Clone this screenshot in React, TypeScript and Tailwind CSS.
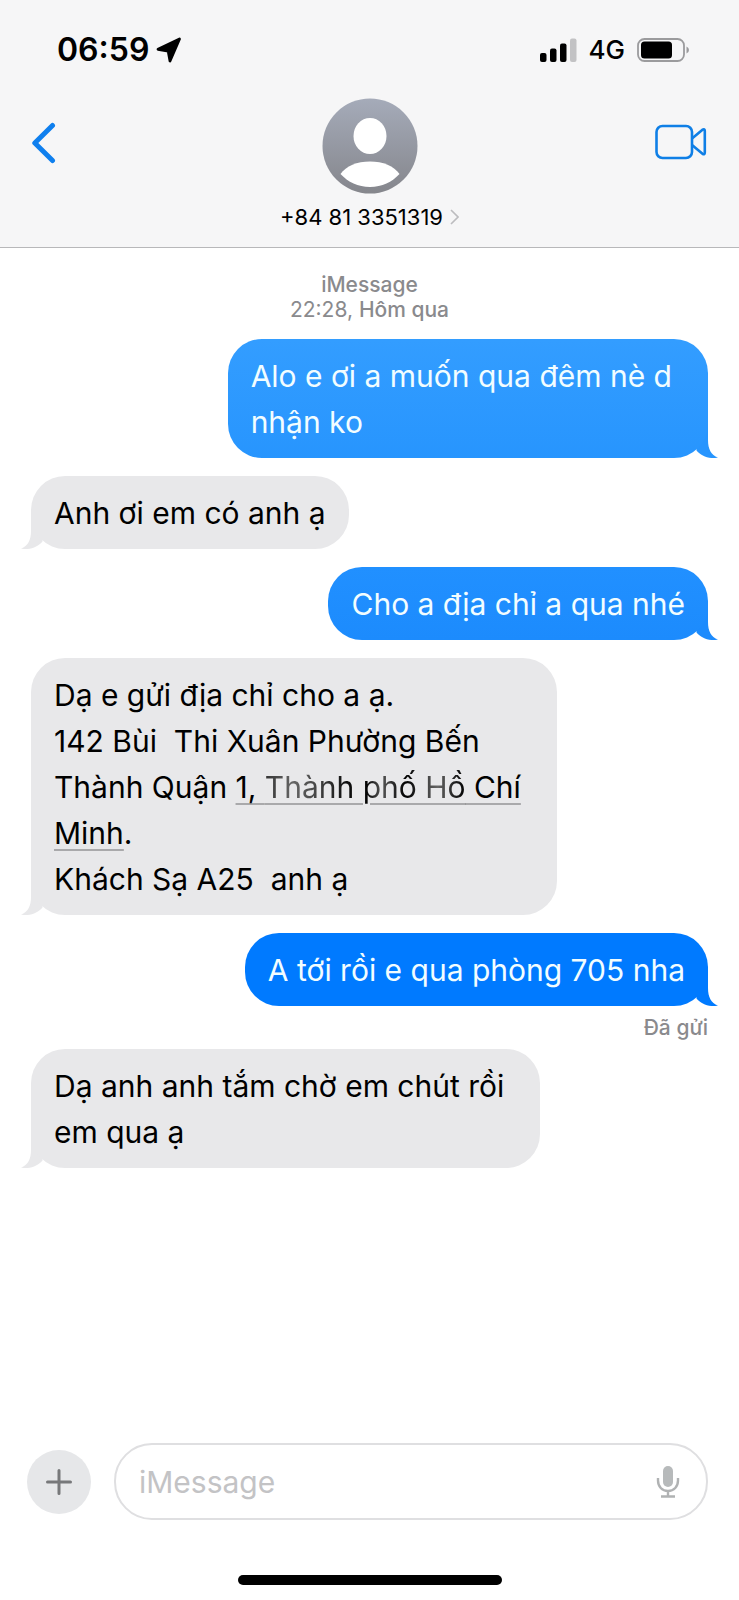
import type { ReactNode } from "react";

type Side = "sent" | "received";

function Tail({ side, className }: { side: Side; className: string }) {
  return (
    <svg
      aria-hidden="true"
      viewBox="0 0 30 40"
      className={`absolute bottom-0 h-10 w-[30px] ${side === "sent" ? "-right-[10px]" : "-left-[10px] -scale-x-100"} ${className}`}
    >
      <path d="M8 3H20V22C20 31 23 37 30 39.6C21 41.500 13 37.500 8.500 32.500Z" fill="currentColor" />
    </svg>
  );
}

function Bubble({
  side,
  fill,
  tail,
  wrapped = false,
  children,
}: {
  side: Side;
  fill: string;
  tail: string;
  wrapped?: boolean;
  children: ReactNode;
}) {
  return (
    <li className={`relative ${side === "sent" ? "self-end text-[#f2fdff]" : "self-start text-black"}`}>
      <Tail side={side} className={tail} />
      <div
        className={`relative rounded-[34px] pt-[14px] pb-[13px] pl-[23px] text-[30px] leading-[46px] whitespace-pre ${wrapped ? "pr-9" : "pr-[23px]"} ${fill}`}
      >
        {children}
      </div>
    </li>
  );
}

function MapLink({ children }: { children: ReactNode }) {
  return (
    <a href="#map" className="underline decoration-[#a9a9ab] decoration-2 underline-offset-[5px]">
      {children}
    </a>
  );
}

function StatusBar() {
  return (
    <div className="flex h-[98px] items-center justify-between pt-[2px] pr-[50px] pl-[57px]">
      <div className="flex items-center gap-[7px]">
        <span className="text-[32px] leading-10 font-semibold">06:59</span>
        <svg aria-hidden="true" viewBox="0 0 26 26" className="size-[26px]">
          <path
            d="M2 12.300L23.500 2L14 24L12.200 14.200Z"
            fill="#000"
            stroke="#000"
            strokeWidth="2.800"
            strokeLinejoin="round"
          />
        </svg>
      </div>
      <div className="flex items-center">
        <svg aria-hidden="true" viewBox="0 0 37 24" className="mr-3 h-6 w-[37px]">
          <rect x="0" y="15" width="6.500" height="9" rx="2" />
          <rect x="10" y="10.500" width="6.500" height="13.500" rx="2" />
          <rect x="20" y="5.500" width="6.500" height="18.500" rx="2" />
          <rect x="30" y="0.500" width="6.500" height="23.500" rx="2" fill="#c2c2c4" />
        </svg>
        <span className="mr-3 text-[26px] leading-10 font-medium">4G</span>
        <svg aria-hidden="true" viewBox="0 0 52 24" className="h-6 w-[52px]">
          <rect x="1" y="1" width="46" height="22" rx="6.500" fill="none" stroke="#9b9b9d" strokeWidth="1.800" />
          <rect x="4" y="3.500" width="31" height="17" rx="3.500" />
          <path d="M49.500 8.500Q52 9.500 52 12T49.500 15.500Z" fill="#9b9b9d" />
        </svg>
      </div>
    </div>
  );
}

function Header() {
  return (
    <header className="border-b border-[#b8b8ba] bg-[#f6f6f7]">
      <StatusBar />
      <div className="grid h-[149px] grid-cols-[1fr_auto_1fr] items-start px-8">
        <button type="button" aria-label="Quay lại" className="mt-6 w-[52px]">
          <svg viewBox="0 0 26 42" className="h-[42px] w-[26px]">
            <path
              d="M20.500 3.500L2.800 21L20.500 38.500"
              fill="none"
              stroke="#0f7fee"
              strokeWidth="5"
              strokeLinecap="round"
              strokeLinejoin="round"
            />
          </svg>
        </button>
        <button type="button" className="flex flex-col items-center">
          <svg aria-hidden="true" viewBox="0 0 96 96" className="size-24">
            <defs>
              <linearGradient id="avatar" x1="0" y1="0" x2="0" y2="1">
                <stop offset="0" stopColor="#a5abb9" />
                <stop offset="1" stopColor="#85868c" />
              </linearGradient>
            </defs>
            <circle cx="48" cy="48" r="47.500" fill="url(#avatar)" />
            <ellipse cx="48" cy="38" rx="16.500" ry="18" fill="#fff" />
            <path d="M18.500 76C24 68 35 63.500 48 63.500S72 68 77.500 76C70 84 60 89 48 89S26 84 18.500 76Z" fill="#fff" />
          </svg>
          <span className="mt-[7px] flex items-center gap-[7px] text-[22px] leading-8">
            +84 81 3351319
            <svg aria-hidden="true" viewBox="0 0 9 16" className="h-4 w-[9px]">
              <path d="M1 1L8 8L1 15" fill="none" stroke="#bcbcbf" strokeWidth="1.600" />
            </svg>
          </span>
        </button>
        <button type="button" aria-label="Gọi video" className="mt-[26px] w-[52px] justify-self-end">
          <svg viewBox="0 0 52 36" className="h-9 w-[52px]">
            <g fill="none" stroke="#0f7fe6" strokeWidth="2.600" strokeLinejoin="round">
              <rect x="1.500" y="2" width="35.500" height="32" rx="6" />
              <path d="M37 14.500L47.500 5.700Q49.800 4.500 49.800 7V28.500Q49.800 31 47.500 29.800L37 21" />
            </g>
          </svg>
        </button>
      </div>
    </header>
  );
}

const gray = "bg-[#e8e8ea]";
const grayTail = "text-[#e8e8ea]";

export default function App() {
  return (
    <div className="flex min-h-screen flex-col bg-white font-[Inter,'Liberation_Sans',sans-serif] text-black">
      <Header />
      <main className="flex-1 px-[31px] pt-6">
        <p className="text-center text-[21px] leading-[25px] text-[#8a8a8d]">
          <span className="font-medium">iMessage</span>
          <br />
          22:28, <span className="font-medium">Hôm qua</span>
        </p>
        <ol className="mt-[17px] flex flex-col gap-[18px]">
          <Bubble side="sent" wrapped fill="bg-linear-to-b from-[#339dff] to-[#2795fe]" tail="text-[#2795fe]">
            {"Alo e ơi a muốn qua đêm nè d\nnhận ko"}
          </Bubble>
          <Bubble side="received" fill={gray} tail={grayTail}>
            Anh ơi em có anh ạ
          </Bubble>
          <Bubble side="sent" fill="bg-linear-to-b from-[#2190ff] to-[#1c8bfd]" tail="text-[#1c8bfd]">
            Cho a địa chỉ a qua nhé
          </Bubble>
          <Bubble side="received" wrapped fill={gray} tail={grayTail}>
            <p>Dạ e gửi địa chỉ cho a ạ.</p>
            <p>{"142 Bùi  Thi Xuân Phường Bến"}</p>
            <p>
              {"Thành Quận "}
              <MapLink>
                {"1, "}
                <span className="bg-[linear-gradient(90deg,#333_0%,#666_14%,#444_26%,#111_40%,#000_50%,#555_58%,#000_70%,#666_86%,#222_94%,#000_100%)] bg-clip-text text-transparent">
                  Thành phố Hồ
                </span>
                {" Chí"}
              </MapLink>
            </p>
            <p>
              <MapLink>Minh</MapLink>.
            </p>
            <p>{"Khách Sạ A25  anh ạ"}</p>
          </Bubble>
          <Bubble side="sent" fill="bg-[#007aff]" tail="text-[#007aff]">
            A tới rồi e qua phòng 705 nha
          </Bubble>
          <li className="-my-[10px] self-end text-[21px] leading-[27px] font-medium text-[#8a8a8d]">
            Đã gửi
          </li>
          <Bubble side="received" wrapped fill={gray} tail={grayTail}>
            {"Dạ anh anh tắm chờ em chút rồi\nem qua ạ"}
          </Bubble>
        </ol>
      </main>
      <footer className="px-[27px] pb-[15px]">
        <form className="flex items-center gap-[23px] pr-1">
          <button
            type="button"
            aria-label="Thêm"
            className="flex size-16 shrink-0 items-center justify-center rounded-full bg-[#e6e7e9]"
          >
            <svg viewBox="0 0 26 26" className="size-[26px]">
              <path d="M13 1.500V24.500M1.500 13H24.500" stroke="#77787a" strokeWidth="3" strokeLinecap="round" />
            </svg>
          </button>
          <div className="flex h-[77px] min-w-0 flex-1 items-center rounded-[38px] border-2 border-[#dfdfe1] pr-[26px] pl-[23px]">
            <input
              type="text"
              aria-label="iMessage"
              placeholder="iMessage"
              className="min-w-0 flex-1 bg-transparent text-[30px] leading-10 outline-none placeholder:text-[#c3c3c5]"
            />
            <button type="button" aria-label="Ghi âm">
              <svg viewBox="0 0 24 34" className="h-[34px] w-6">
                <rect x="7" y="1" width="10" height="21" rx="5" fill="#b7babb" />
                <path
                  d="M2 13V15.500C2 21.500 6 26 12 26S22 21.500 22 15.500V13M12 26V31M5 31.500H19"
                  fill="none"
                  stroke="#b0b2b3"
                  strokeWidth="2.400"
                />
              </svg>
            </button>
          </div>
        </form>
        <div className="mx-auto mt-[55px] h-[10px] w-[264px] rounded-full bg-black" />
      </footer>
    </div>
  );
}
